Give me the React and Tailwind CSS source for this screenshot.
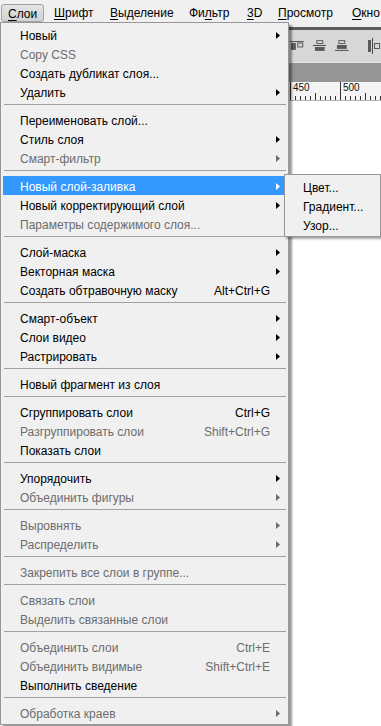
import React from "react";

const font = { fontFamily: '"Liberation Sans", Arial, sans-serif' };

const menu = [
  { label: "Новый", arrow: true },
  { label: "Copy CSS", off: true },
  { label: "Создать дубликат слоя..." },
  { label: "Удалить", arrow: true },
  "sep",
  { label: "Переименовать слой..." },
  { label: "Стиль слоя", arrow: true },
  { label: "Смарт-фильтр", arrow: true, off: true },
  "sep",
  { label: "Новый слой-заливка", arrow: true, hl: true },
  { label: "Новый корректирующий слой", arrow: true },
  { label: "Параметры содержимого слоя...", off: true },
  "sep",
  { label: "Слой-маска", arrow: true },
  { label: "Векторная маска", arrow: true },
  { label: "Создать обтравочную маску", keys: "Alt+Ctrl+G" },
  "sep",
  { label: "Смарт-объект", arrow: true },
  { label: "Слои видео", arrow: true },
  { label: "Растрировать", arrow: true },
  "sep",
  { label: "Новый фрагмент из слоя" },
  "sep",
  { label: "Сгруппировать слои", keys: "Ctrl+G" },
  { label: "Разгруппировать слои", keys: "Shift+Ctrl+G", off: true },
  { label: "Показать слои" },
  "sep",
  { label: "Упорядочить", arrow: true },
  { label: "Объединить фигуры", arrow: true, off: true },
  "sep",
  { label: "Выровнять", arrow: true, off: true },
  { label: "Распределить", arrow: true, off: true },
  "sep",
  { label: "Закрепить все слои в группе...", off: true },
  "sep",
  { label: "Связать слои", off: true },
  { label: "Выделить связанные слои", off: true },
  "sep",
  { label: "Объединить слои", keys: "Ctrl+E", off: true },
  { label: "Объединить видимые", keys: "Shift+Ctrl+E", off: true },
  { label: "Выполнить сведение" },
  "sep",
  { label: "Обработка краев", arrow: true, off: true },
];

const bar = [
  { pre: "", u: "С", post: "лои", w: "w-[53px]" },
  { pre: "", u: "Ш", post: "рифт", w: "w-[56px]" },
  { pre: "", u: "В", post: "ыделение", w: "w-[79px]" },
  { pre: "Фи", u: "л", post: "ьтр", w: "w-[58px]" },
  { pre: "", u: "3", post: "D", w: "w-[31px]" },
  { pre: "", u: "П", post: "росмотр", w: "w-[74px]" },
  { pre: "", u: "О", post: "кно", w: "w-[60px]" },
];

function Arrow({ color }) {
  return (
    <svg width="4" height="7" viewBox="0 0 4 7" className="block">
      <polygon points="0,0 4,3.5 0,7" fill={color} />
    </svg>
  );
}

function Item({ it }) {
  const color = it.hl ? "text-white" : it.off ? "text-[#6d6d6d]" : "text-black";
  const arrowColor = it.hl ? "#ffffff" : it.off ? "#6d6d6d" : "#000000";
  return (
    <div className={`flex h-[19px] items-center pl-[17px] ${it.hl ? "bg-[#3399ff]" : ""} ${color}`}>
      <span className="flex-1 whitespace-nowrap pt-[3px] leading-[16px]">{it.label}</span>
      {it.keys && <span className="whitespace-nowrap pt-[3px] leading-[16px]">{it.keys}</span>}
      <span className="flex w-[16px] items-center pl-[6px] pt-[2px]">
        {it.arrow && <Arrow color={arrowColor} />}
      </span>
    </div>
  );
}

function AlignIcon({ kind }) {
  if (kind === "top")
    return (
      <svg width="14" height="14" viewBox="0 0 14 14">
        <rect x="0" y="2" width="14" height="1" fill="#4a4a4a" />
        <rect x="1" y="4" width="5" height="7" fill="#5a5a5a" />
        <rect x="8" y="4" width="5" height="4" fill="none" stroke="#5a5a5a" />
      </svg>
    );
  if (kind === "mid")
    return (
      <svg width="14" height="14" viewBox="0 0 14 14">
        <rect x="4" y="1.5" width="6" height="3" fill="none" stroke="#5a5a5a" />
        <rect x="0" y="6" width="14" height="1" fill="#4a4a4a" />
        <rect x="2" y="8" width="10" height="4" fill="#5a5a5a" />
      </svg>
    );
  if (kind === "bot")
    return (
      <svg width="14" height="14" viewBox="0 0 14 14">
        <rect x="4" y="1.5" width="6" height="3" fill="none" stroke="#5a5a5a" />
        <rect x="2" y="6" width="10" height="4" fill="#5a5a5a" />
        <rect x="0" y="11" width="14" height="1" fill="#4a4a4a" />
      </svg>
    );
  return (
    <svg width="14" height="16" viewBox="0 0 14 16">
      <rect x="1" y="2" width="3" height="12" fill="#5a5a5a" />
      <rect x="5" y="0" width="1" height="16" fill="#4a4a4a" />
      <rect x="7.5" y="5.5" width="5" height="5" fill="none" stroke="#5a5a5a" />
    </svg>
  );
}

function Ruler() {
  const ticks = [];
  for (let x = 240; x <= 381; x += 5) {
    const rel = (x - 290) % 50;
    const h = rel === 0 ? 18 : rel === 25 || rel === -25 ? 7 : 4;
    ticks.push(<rect key={x} x={x} y={18 - h} width="1" height={h} fill="#333" />);
  }
  return (
    <svg width="381" height="18" className="block">
      {ticks}
      <text x="293" y="9" fontSize="10" fill="#111" style={font}>450</text>
      <text x="343" y="9" fontSize="10" fill="#111" style={font}>500</text>
    </svg>
  );
}

export default function App() {
  return (
    <div className="relative h-[726px] w-[381px] overflow-hidden bg-white text-[12px]" style={font}>
      <div className="flex h-[27px] items-start bg-[#f0f0f0] pt-[4px]">
        {bar.map((b, i) => (
          <div key={i} className={`${b.w} shrink-0`}>
            <span
              className={`block h-[18px] whitespace-nowrap leading-[18px] text-black ${
                i === 0
                  ? "ml-[1px] w-[43px] rounded-[3px] border border-[#a3a3a3] bg-gradient-to-b from-[#e4e4e4] to-[#d2d2d2] pl-[6px] leading-[16px]"
                  : "pl-[1px]"
              }`}
            >
              {b.pre}
              <u className="underline-offset-[2px]">{b.u}</u>
              {b.post}
            </span>
          </div>
        ))}
      </div>
      <div className="h-[3px] bg-[#5c5c5c]" />
      <div className="flex h-[32px] items-center gap-[9px] bg-[#d7d7d7] pl-[290px]">
        <AlignIcon kind="top" />
        <AlignIcon kind="mid" />
        <AlignIcon kind="bot" />
        <div className="ml-[9px]">
          <AlignIcon kind="dist" />
        </div>
      </div>
      <div className="h-[1px] bg-[#e6e6e6]" />
      <div className="h-[19px] bg-[#959595]" />
      <div className="bg-[#f4f4f4]">
        <Ruler />
      </div>
      <div className="h-[1px] bg-[#b5b5b5]" />

      <div className="absolute left-0 top-[22px] w-[289px] border border-[#979797] bg-[#f0f0f0] pb-[2px] pl-[2px] pr-[2px] pt-[2px] shadow-[3px_3px_2px_rgba(0,0,0,0.4)]">
        {menu.map((it, i) =>
          it === "sep" ? (
            <div key={i} className="h-[9px] pl-[1px] pt-[3px]">
              <div className="h-[1px] bg-[#a0a0a0]" />
            </div>
          ) : (
            <Item key={i} it={it} />
          )
        )}
      </div>

      <div className="absolute left-[284px] top-[174px] w-[97px] border border-[#979797] bg-[#f0f0f0] py-[2px] pl-[2px] shadow-[2px_2px_2px_rgba(0,0,0,0.35)]">
        {["Цвет...", "Градиент...", "Узор..."].map((t) => (
          <div key={t} className="flex h-[19px] items-center pl-[16px] text-black">
            <span className="pt-[3px] leading-[16px]">{t}</span>
          </div>
        ))}
      </div>
    </div>
  );
}
